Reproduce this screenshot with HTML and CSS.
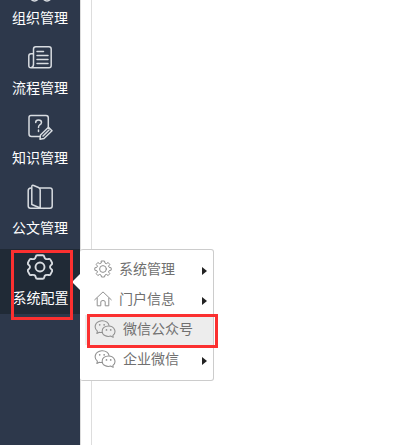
FILE: index.html
```html
<!DOCTYPE html>
<html lang="zh-CN">
<head>
<meta charset="utf-8">
<title>系统配置</title>
<link rel="stylesheet" href="styles.css">
</head>
<body>
<svg class="defs" width="0" height="0">
  <symbol id="wechat" viewBox="0 0 20 17">
    <path d="M7.2 11.8 Q5.8 11.9 4.6 11.5 L2.3 12.8 L2.8 10.5 C-.8 7.6 .2 1.3 7 .7 C11 .5 13.6 3 13.8 5.2"/>
    <path d="M17.5 14.6 C21.3 11.5 19 5.6 13.4 5.6 C9.8 5.6 7.3 7.8 7.3 10.6 C7.3 14.4 11.5 16.2 15.3 15.2 L17.7 16.4 Z"/>
    <g class="dots"><circle cx="5" cy="4.6" r=".8"/><circle cx="9.2" cy="4.6" r=".8"/><circle cx="11.4" cy="9.4" r=".8"/><circle cx="15.4" cy="9.4" r=".8"/></g>
  </symbol>
</svg>
<div class="app">
  <nav class="sidebar">
    <div class="item">
      <svg class="icon people" viewBox="0 0 26 26"><circle cx="7.5" cy="22.7" r="4.2"/><circle cx="20" cy="22.7" r="4.2"/></svg>
      <span>组织管理</span>
    </div>
    <div class="item">
      <svg class="icon" viewBox="0 0 26 26"><path d="M6.5 21 V5 Q6.5 2.7 8.8 2.7 H22 Q24.2 2.7 24.2 5 V21.5 Q24.2 23.8 22 23.8 H4 Q1.8 23.8 1.8 21.5 V12 Q1.8 9.7 4 9.7 H6.5 M6.5 20 Q6.5 23.5 4 23.8"/><path d="M10 7.5 H16.5 M10 11.5 H21 M10 15.5 H21 M10 19.5 H21"/></svg>
      <span>流程管理</span>
    </div>
    <div class="item">
      <svg class="icon" viewBox="0 0 26 26"><path d="M13 22.5 H4.5 Q2 22.5 2 20 V3.5 Q2 1.5 4 1.5 H19 Q21.3 1.5 21.3 3.8 V13"/><path d="M8.7 8.5 Q8.7 6 11.5 6 Q14.5 6 14.5 8.5 Q14.5 10.1 12.6 11 Q11.5 11.8 11.5 13.5 M11.5 16 V17.5"/><path d="M13.5 21 L21.5 13.2 L25 16.7 L17 24.5 L13 25.2 Z M16 22 L22 16"/></svg>
      <span>知识管理</span>
    </div>
    <div class="item">
      <svg class="icon" viewBox="0 0 26 26"><path d="M13 4 H23 Q25.2 4 25.2 6.2 V22 Q25.2 24.2 23 24.2 H3.5 Q1.2 24.2 1.2 22 V6.5 Q1.2 4.3 4 4"/><path d="M4.8 20.5 V2.5 Q4.8 .7 6.7 1.5 L11.5 3.5 Q13.2 4.2 13.2 6 V24 L4.8 20.5"/></svg>
      <span>公文管理</span>
    </div>
    <div class="item active">
      <svg class="icon gear" viewBox="0 0 26 26"><path d="M10.3 1.2 H15.7 Q17 1.2 17.2 2.6 Q17.8 5.8 21.5 5 Q23 4.5 23.6 5.8 L25 8.6 Q25.6 9.9 24.4 10.8 Q21.6 13 24.4 15.2 Q25.6 16.1 25 17.4 L23.6 20.2 Q23 21.5 21.5 21 Q17.8 20.2 17.2 23.4 Q17 24.8 15.7 24.8 H10.3 Q9 24.8 8.8 23.4 Q8.2 20.2 4.5 21 Q3 21.5 2.4 20.2 L1 17.4 Q.4 16.1 1.6 15.2 Q4.4 13 1.6 10.8 Q.4 9.9 1 8.6 L2.4 5.8 Q3 4.5 4.5 5 Q8.2 5.8 8.8 2.6 Q9 1.2 10.3 1.2 Z"/><circle cx="13" cy="13" r="4.5"/></svg>
      <span>系统配置</span>
    </div>
  </nav>
  <div class="gutter"></div>
  <main class="content"></main>
</div>
<div class="menu">
  <div class="row"><svg class="mini" viewBox="0 0 18 18"><path d="M7.5 1 H10.5 L11 3.1 L12.3 3.7 L14.2 2.5 L15.8 4.5 L14.5 6.1 L15.1 7.3 L17.2 7.8 V10.2 L15.1 10.7 L14.5 12 L15.8 13.6 L14.2 15.5 L12.3 14.4 L11 15 L10.5 17 H7.5 L7 15 L5.7 14.4 L3.8 15.5 L2.2 13.6 L3.5 12 L2.9 10.7 L.8 10.2 V7.8 L2.9 7.3 L3.5 6.1 L2.2 4.5 L3.8 2.5 L5.7 3.7 L7 3.1 Z"/><circle cx="9" cy="9" r="3.4"/></svg><span>系统管理</span><i class="more"></i></div>
  <div class="row"><svg class="mini" viewBox="0 0 18 18"><path d="M.7 9.8 L9 1.9 L17.3 9.8 M3.2 8.2 V15.8 H6.8 V12 Q6.8 10.5 9 10.5 Q11.2 10.5 11.2 12 V15.8 H14.8 V8.2"/></svg><span>门户信息</span><i class="more"></i></div>
  <div class="row hover"><svg class="mini wide"><use href="#wechat"/></svg><span>微信公众号</span></div>
  <div class="row"><svg class="mini wide"><use href="#wechat"/></svg><span>企业微信</span><i class="more"></i></div>
</div>
<div class="pointer"></div>
<div class="mark mark-nav"></div>
<div class="mark mark-menu"></div>
</body>
</html>
```

FILE: styles.css
```css
body {
  margin: 0;
  background: #fff;
  font: 14px/20px "Noto Sans CJK SC", sans-serif;
  overflow: hidden;
}
.defs { position: absolute; }
svg {
  fill: none;
  stroke: currentColor;
  stroke-linejoin: round;
  stroke-linecap: round;
}
.app { display: flex; height: 445px; overflow: hidden; }
.sidebar {
  width: 80px;
  flex: none;
  background: #2d384b;
  color: #fff;
}
.item {
  height: 65px;
  margin-bottom: 5px;
  display: flex;
  flex-direction: column;
  align-items: center;
  box-sizing: border-box;
  padding-top: 5px;
}
.item:first-child { margin-top: -31px; }
.item span { margin-top: 7px; white-space: nowrap; }
.active { background: #202a36; }
.active span { padding-left: 1px; }
.icon { width: 26px; height: 26px; flex: none; color: #d8dce1; stroke-width: 1.5; }
.icon.gear { stroke-width: 1.9; }
.icon.people { overflow: visible; }
.gutter {
  width: 10px;
  border-left: 1px solid #ddd;
  border-right: 1px solid #ddd;
}
.content { flex: 1; }
.menu {
  position: absolute;
  left: 80px;
  top: 249px;
  width: 134px;
  height: 132px;
  box-sizing: border-box;
  padding: 5px 0 5px 5px;
  background: #fff;
  border: 1px solid #ccc;
  border-left: 0;
  border-radius: 3px;
  color: #707070;
}
.row {
  height: 30px;
  display: flex;
  align-items: center;
  padding: 0 6px 0 9px;
}
.row span { margin: -4px 0 0 7px; }
.hover { background: #ededed; }
.mini {
  width: 18px;
  height: 18px;
  margin-top: -2px;
  color: #909090;
  stroke-width: 1;
}
.mini.wide { width: 22px; height: 18px; }
.dots { fill: currentColor; stroke: none; }
.more {
  margin: 2px 0 0 auto;
  border: 4px solid transparent;
  border-left: 5px solid #222;
  border-right: 0;
}
.pointer {
  position: absolute;
  left: 72px;
  top: 274px;
  border: 8px solid transparent;
  border-right-color: #fff;
  border-left: 0;
}
.mark {
  position: absolute;
  box-sizing: border-box;
  border: 3px solid #fb3030;
}
.mark-nav { left: 11px; top: 250px; width: 62px; height: 70px; }
.mark-menu { left: 87px; top: 314px; width: 131px; height: 34px; }
```
